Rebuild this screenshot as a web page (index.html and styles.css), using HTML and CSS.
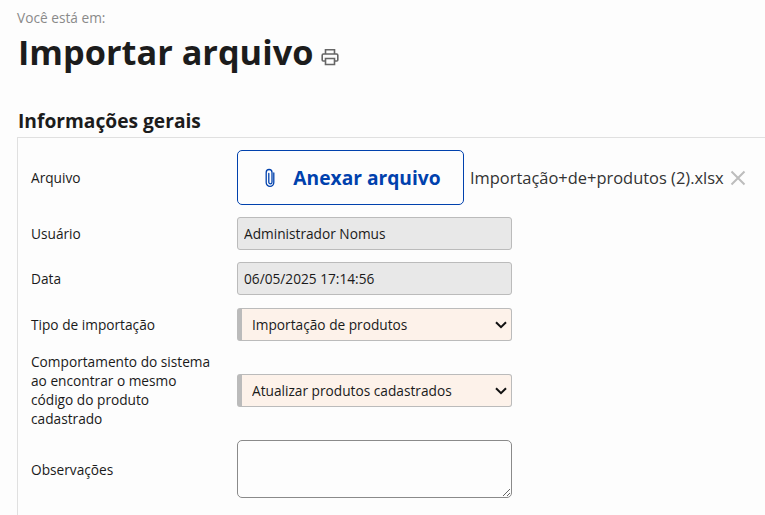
FILE: index.html
```html
<!DOCTYPE html>
<html lang="pt-BR">
<head>
    <meta charset="UTF-8">
    <meta name="viewport" content="width=device-width, initial-scale=1.0">
    <title>Importar arquivo</title>
    <link rel="stylesheet" href="styles.css">
</head>
<body>
    <div class="breadcrumb">Você está em:</div>
    <h1 class="page-title">
        Importar arquivo
        <svg class="print-icon" viewBox="0 0 18 18" width="18" height="18" aria-hidden="true">
            <path d="M4.5 6V1.8h9V6M4.5 13H2.2a1 1 0 0 1-1-1V7.2a1.2 1.2 0 0 1 1.2-1.2h13.2a1.2 1.2 0 0 1 1.2 1.2V12a1 1 0 0 1-1 1h-2.3" fill="none" stroke="#666" stroke-width="1.6"/>
            <path d="M4.5 10.5h9v6h-9z" fill="none" stroke="#666" stroke-width="1.6"/>
        </svg>
    </h1>

    <h2 class="section-title">Informações gerais</h2>
    <div class="panel">
        <!-- anexo -->
        <div class="row row-file">
            <label class="field-label">Arquivo</label>
            <button class="attach-btn" type="button">
                <svg class="clip-icon" viewBox="0 0 12 20" width="12" height="20" aria-hidden="true">
                    <path d="M9.8 5v9.6a3.8 3.8 0 0 1-7.6 0V4.4a2.9 2.9 0 0 1 5.8 0v9.8a1.6 1.6 0 0 1-3.2 0V5.5" fill="none" stroke="#0041ad" stroke-width="1.3" stroke-linecap="round"/>
                </svg>
                Anexar arquivo
            </button>
            <span class="file-name">Importação+de+produtos (2).xlsx</span>
            <svg class="remove-icon" viewBox="0 0 16 16" width="16" height="16" aria-hidden="true">
                <path d="M1.5 1.5l13 13M14.5 1.5l-13 13" stroke="#bdbdbd" stroke-width="2"/>
            </svg>
        </div>

        <div class="row">
            <label class="field-label">Usuário</label>
            <input class="field field-readonly" type="text" value="Administrador Nomus" readonly>
        </div>

        <div class="row row-data">
            <label class="field-label">Data</label>
            <input class="field field-readonly" type="text" value="06/05/2025 17:14:56" readonly>
        </div>

        <div class="row row-tipo">
            <label class="field-label">Tipo de importação</label>
            <div class="select-wrap">
                <select class="field field-select">
                    <option>Importação de produtos</option>
                </select>
                <svg class="chevron" viewBox="0 0 12 8" width="12" height="8" aria-hidden="true">
                    <path d="M1 1.2l5 5 5-5" fill="none" stroke="#111" stroke-width="2"/>
                </svg>
            </div>
        </div>

        <div class="row row-comportamento">
            <label class="field-label">Comportamento do sistema ao encontrar o mesmo código do produto cadastrado</label>
            <div class="select-wrap">
                <select class="field field-select">
                    <option>Atualizar produtos cadastrados</option>
                </select>
                <svg class="chevron" viewBox="0 0 12 8" width="12" height="8" aria-hidden="true">
                    <path d="M1 1.2l5 5 5-5" fill="none" stroke="#111" stroke-width="2"/>
                </svg>
            </div>
        </div>

        <div class="row row-obs">
            <label class="field-label">Observações</label>
            <textarea class="field field-text"></textarea>
        </div>
    </div>
</body>
</html>
```

FILE: styles.css
```css
body {
    margin: 0;
    height: 515px;
    overflow: hidden;
    background: #fdfdfd;
    color: #1a1a1a;
    font-family: "Open Sans", Arial, sans-serif;
    font-size: 13.7px;
}

.breadcrumb {
    margin: 8px 0 0 17px;
    height: 19px;
    line-height: 19px;
    color: #8a8a8a;
}

.page-title {
    margin: 3px 0 0 18px;
    height: 44px;
    line-height: 44px;
    font-size: 34.3px;
    font-weight: 700;
    color: #1c1c1c;
}

.print-icon {
    margin-left: -1px;
    vertical-align: -1px;
}

.section-title {
    margin: 33px 0 0 18px;
    height: 30px;
    line-height: 27px;
    font-size: 19.2px;
    font-weight: 700;
    color: #1c1c1c;
}

.panel {
    margin-left: 17px;
    padding: 12px 0 0 13px;
    height: 378px;
    box-sizing: border-box;
    border-top: 1px solid #e0e0e0;
    border-left: 1px solid #e0e0e0;
}

.row {
    display: flex;
    align-items: center;
    margin-bottom: 12px;
}

.row-data {
    margin-bottom: 13px;
}

.row-tipo {
    margin-bottom: 11px;
}

.field-label {
    flex: none;
    width: 206px;
    padding-right: 20px;
    box-sizing: border-box;
    line-height: 19px;
    color: #1a1a1a;
}

.attach-btn {
    display: flex;
    align-items: center;
    justify-content: center;
    gap: 17px;
    flex: none;
    width: 227px;
    height: 55px;
    padding: 0 0 0 4px;
    background: #fdfdfd;
    border: 1px solid #0041ad;
    border-radius: 5px;
    color: #0041ad;
    font-family: inherit;
    font-size: 19.2px;
    font-weight: 700;
}

.file-name {
    margin-left: 6px;
    font-size: 16.45px;
    color: #333;
    white-space: nowrap;
}

.remove-icon {
    flex: none;
    margin-left: 6px;
}

.field {
    display: block;
    width: 275px;
    height: 33px;
    box-sizing: border-box;
    border: 1px solid #bbb;
    border-radius: 3px;
    font-family: inherit;
    font-size: 13.7px;
    color: #1a1a1a;
}

.field-readonly {
    padding: 0 6px;
    background: #e8e8e8;
    outline: none;
}

.select-wrap {
    position: relative;
}

.chevron {
    position: absolute;
    top: 13px;
    right: 5px;
    pointer-events: none;
}

.field-select {
    appearance: none;
    padding-left: 10px;
    background-color: #fdf2ea;
    border-left: 5px solid #bbb;
}

.field-text {
    height: 58px;
    border-color: #8a8a8a;
    border-radius: 5px;
    background: #fdfdfd;
}
```
